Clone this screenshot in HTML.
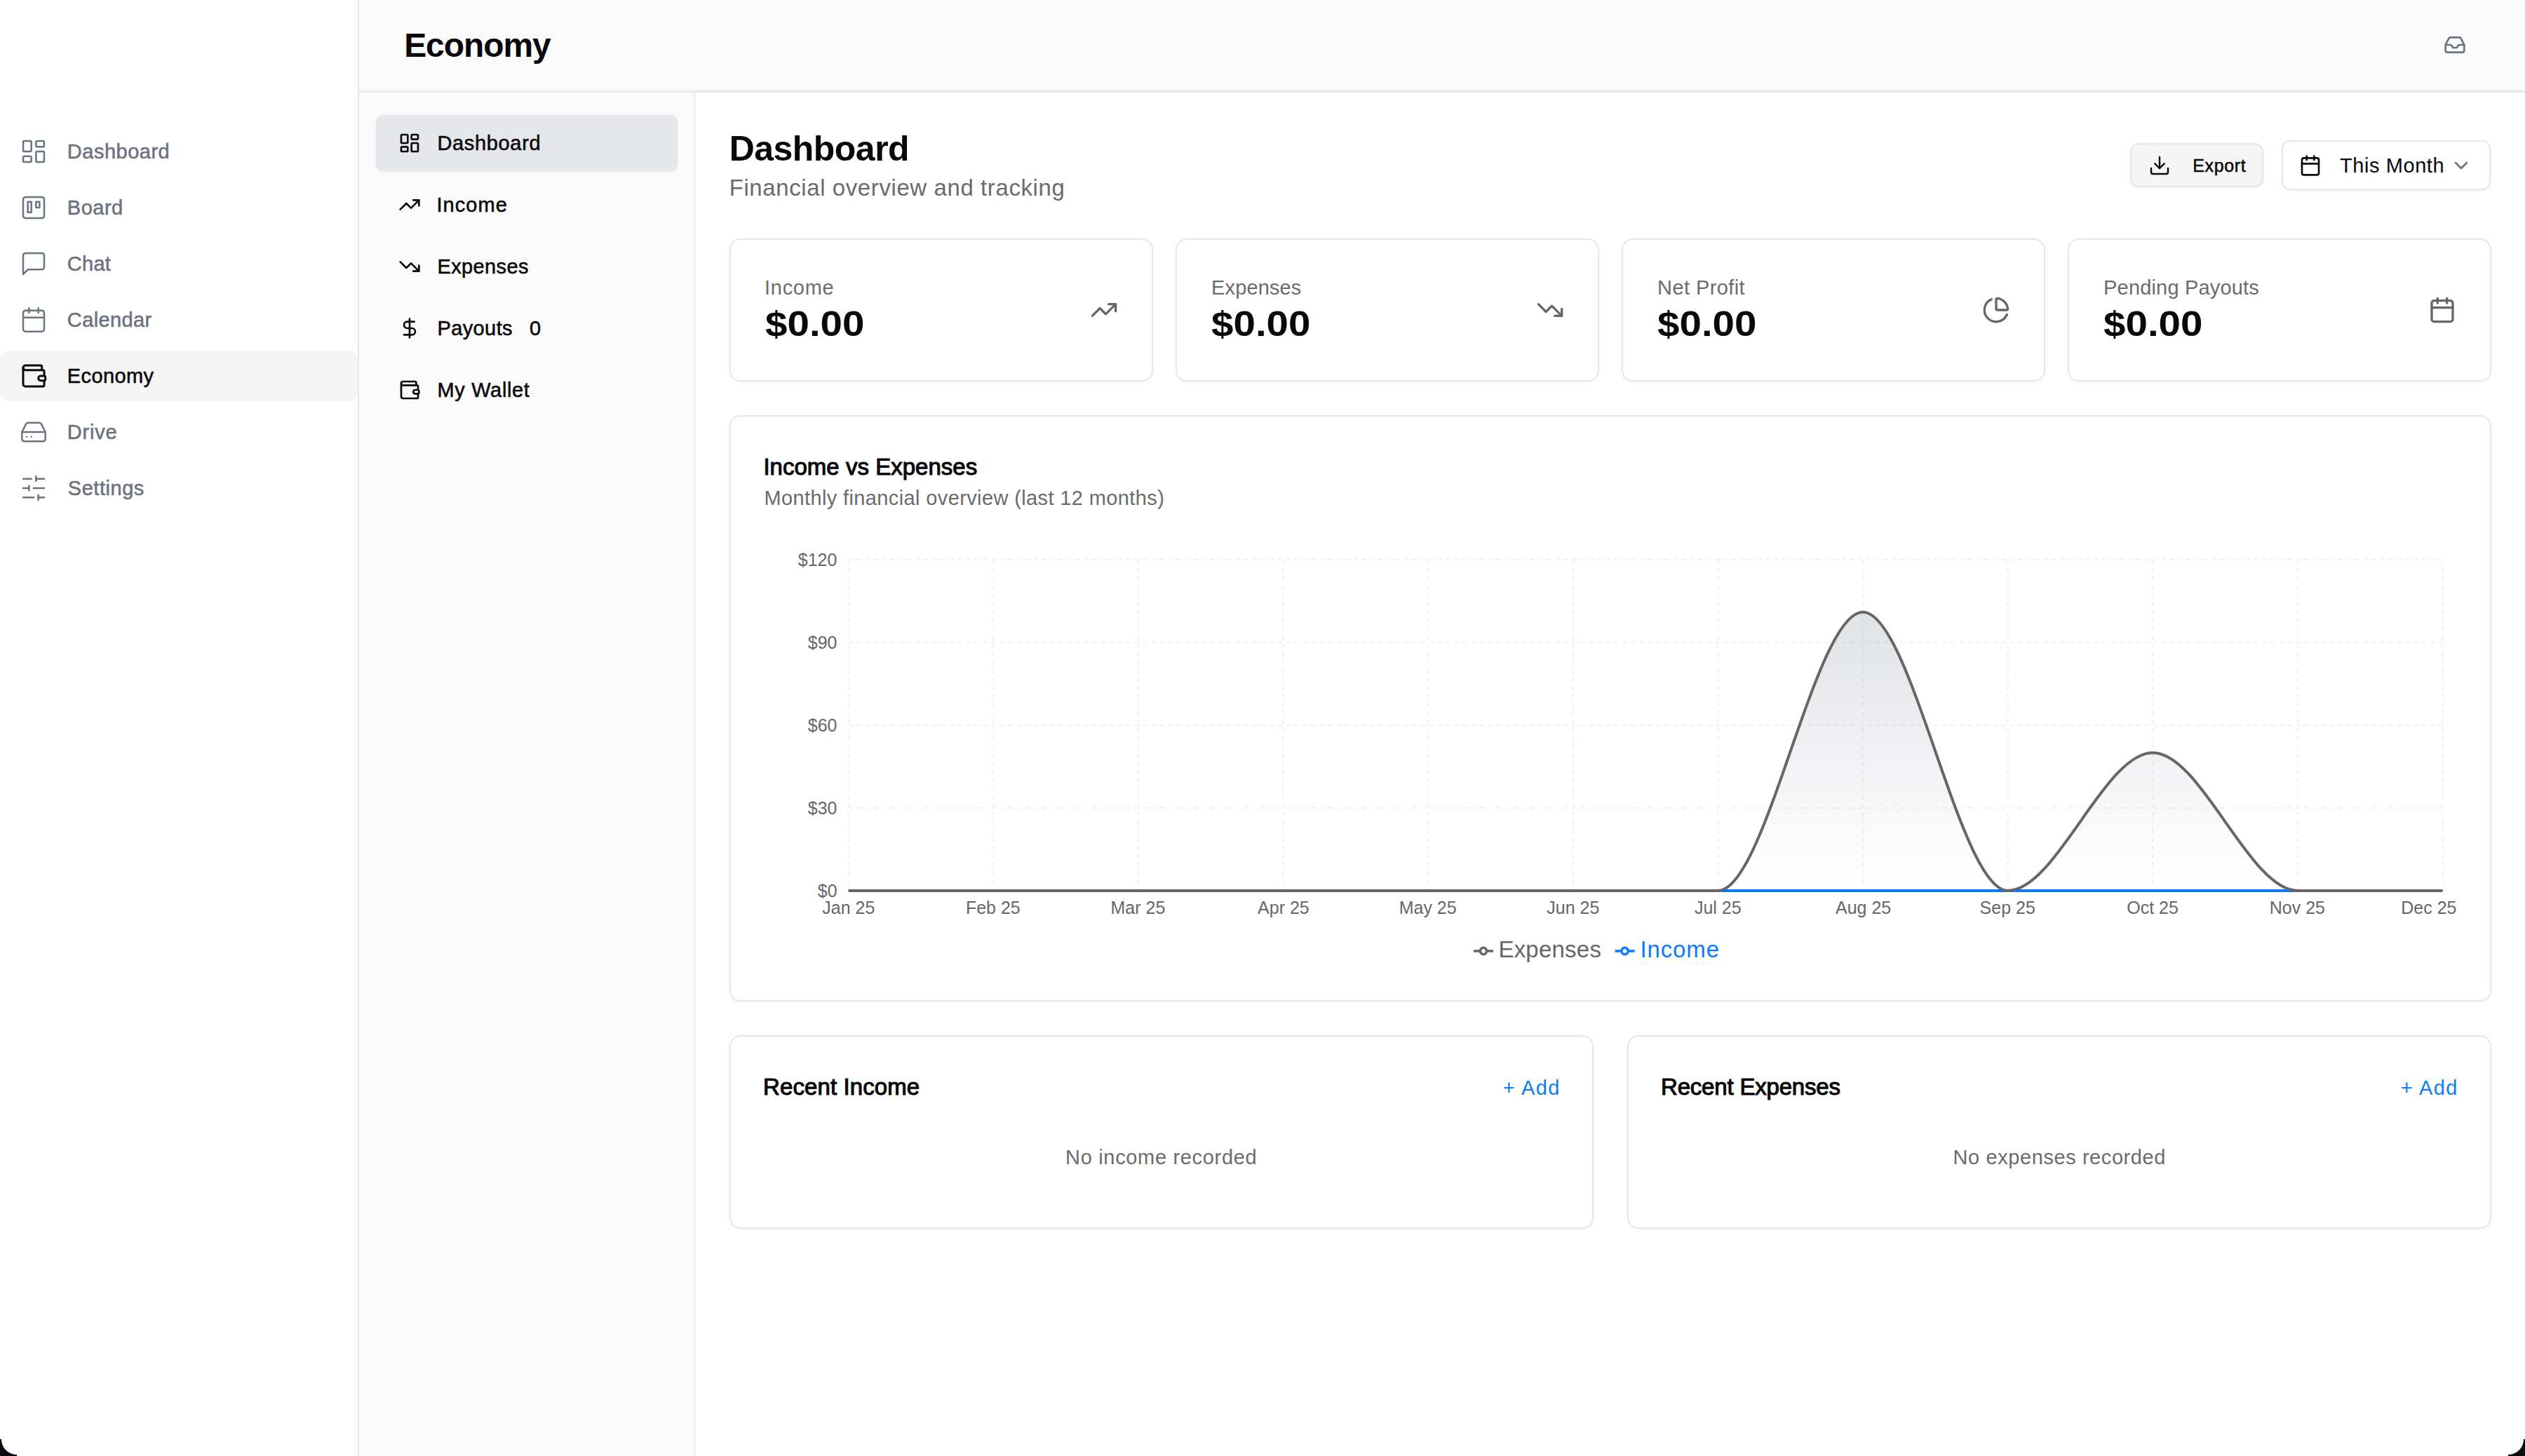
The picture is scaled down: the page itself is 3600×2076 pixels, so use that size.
<!DOCTYPE html>
<html><head><meta charset="utf-8"><style>
html,body{margin:0;padding:0;width:3600px;height:2076px;overflow:hidden;background:#fff;}
body{position:relative;font-family:"Liberation Sans", sans-serif;}
.b{position:absolute;box-sizing:content-box}
.card{background:#fff;border:2px solid #e5e7eb;border-radius:16px;box-shadow:0 2px 4px rgba(0,0,0,0.04)}
.t{position:absolute;white-space:nowrap;font-family:"Liberation Sans", sans-serif}
.ic{position:absolute;overflow:visible}
</style></head><body>

<div class="b" style="left:0;top:0;width:510px;height:2076px;background:#ffffff"></div>
<div class="b" style="left:510px;top:0;width:2px;height:2076px;background:#e5e7eb"></div>
<div class="b" style="left:512px;top:0;width:3088px;height:130px;background:#fafafa"></div>
<div class="b" style="left:512px;top:128px;width:3088px;height:2px;background:#f0f0f2"></div>
<div class="b" style="left:512px;top:130px;width:3088px;height:2px;background:#e5e7eb"></div>
<div class="b" style="left:512px;top:132px;width:478px;height:1944px;background:#fafafa"></div>
<div class="b" style="left:990px;top:132px;width:2px;height:1944px;background:#f0f0f2"></div>
<div class="b" style="left:0;top:500px;width:510px;height:72px;background:#f4f4f5;border-radius:12px"></div>
<div class="b" style="left:536px;top:164px;width:430px;height:80px;background:#e5e7eb;border-radius:9px;box-shadow:0 2px 4px rgba(0,0,0,0.04)"></div>
<div class="b" style="left:3037px;top:204px;width:186px;height:59px;background:#f5f5f5;border:2px solid #e5e7eb;border-radius:12px;box-shadow:0 2px 3px rgba(0,0,0,0.04)"></div>
<div class="b" style="left:3253px;top:200px;width:294px;height:67px;background:#ffffff;border:2px solid #e5e7eb;border-radius:12px;box-shadow:0 2px 4px rgba(0,0,0,0.05)"></div>
<div class="b card" style="left:1040px;top:340px;width:600px;height:200px"></div>
<div class="b card" style="left:1676px;top:340px;width:600px;height:200px"></div>
<div class="b card" style="left:2312px;top:340px;width:600px;height:200px"></div>
<div class="b card" style="left:2948px;top:340px;width:600px;height:200px"></div>
<div class="b card" style="left:1040px;top:592px;width:2508px;height:832px"></div>
<div class="b card" style="left:1040px;top:1476px;width:1228px;height:272px"></div>
<div class="b card" style="left:2320px;top:1476px;width:1228px;height:272px"></div>

<svg class="ic" style="left:0;top:0" width="3600" height="2076" viewBox="0 0 3600 2076">
<defs><linearGradient id="gx" x1="0" y1="0" x2="0" y2="1"><stop offset="5%" stop-color="#a6a9b4" stop-opacity="0.32"/><stop offset="95%" stop-color="#a6a9b4" stop-opacity="0"/></linearGradient></defs>
<g stroke="#f0f0f0" stroke-width="2" stroke-dasharray="6 6" fill="none"><line x1="1209.8" x2="3482.4" y1="797.90" y2="797.90"/><line x1="1209.8" x2="3482.4" y1="915.90" y2="915.90"/><line x1="1209.8" x2="3482.4" y1="1033.90" y2="1033.90"/><line x1="1209.8" x2="3482.4" y1="1151.90" y2="1151.90"/><line x1="1209.80" x2="1209.80" y1="797.9" y2="1269.9"/><line x1="1416.40" x2="1416.40" y1="797.9" y2="1269.9"/><line x1="1623.00" x2="1623.00" y1="797.9" y2="1269.9"/><line x1="1829.60" x2="1829.60" y1="797.9" y2="1269.9"/><line x1="2036.20" x2="2036.20" y1="797.9" y2="1269.9"/><line x1="2242.80" x2="2242.80" y1="797.9" y2="1269.9"/><line x1="2449.40" x2="2449.40" y1="797.9" y2="1269.9"/><line x1="2656.00" x2="2656.00" y1="797.9" y2="1269.9"/><line x1="2862.60" x2="2862.60" y1="797.9" y2="1269.9"/><line x1="3069.20" x2="3069.20" y1="797.9" y2="1269.9"/><line x1="3275.80" x2="3275.80" y1="797.9" y2="1269.9"/><line x1="3482.40" x2="3482.40" y1="797.9" y2="1269.9"/></g>
<line x1="1209.8" x2="3482.4" y1="1269.9" y2="1269.9" stroke="#0a7aff" stroke-width="4"/>
<path d="M1209.80,1269.90 C1278.67,1269.90 1347.53,1269.90 1416.40,1269.90 C1485.27,1269.90 1554.13,1269.90 1623.00,1269.90 C1691.87,1269.90 1760.73,1269.90 1829.60,1269.90 C1898.47,1269.90 1967.33,1269.90 2036.20,1269.90 C2105.07,1269.90 2173.93,1269.90 2242.80,1269.90 C2311.67,1269.90 2380.53,1269.90 2449.40,1269.90 C2518.27,1269.90 2587.13,872.63 2656.00,872.63 C2724.87,872.63 2793.73,1269.90 2862.60,1269.90 C2931.47,1269.90 3000.33,1073.23 3069.20,1073.23 C3138.07,1073.23 3206.93,1269.90 3275.80,1269.90 C3344.67,1269.90 3413.53,1269.90 3482.40,1269.90 L3482.40,1269.90 L1209.80,1269.90 Z" fill="url(#gx)" stroke="none"/>
<path d="M1209.80,1269.90 C1278.67,1269.90 1347.53,1269.90 1416.40,1269.90 C1485.27,1269.90 1554.13,1269.90 1623.00,1269.90 C1691.87,1269.90 1760.73,1269.90 1829.60,1269.90 C1898.47,1269.90 1967.33,1269.90 2036.20,1269.90 C2105.07,1269.90 2173.93,1269.90 2242.80,1269.90 C2311.67,1269.90 2380.53,1269.90 2449.40,1269.90 C2518.27,1269.90 2587.13,872.63 2656.00,872.63 C2724.87,872.63 2793.73,1269.90 2862.60,1269.90 C2931.47,1269.90 3000.33,1073.23 3069.20,1073.23 C3138.07,1073.23 3206.93,1269.90 3275.80,1269.90 C3344.67,1269.90 3413.53,1269.90 3482.40,1269.90" fill="none" stroke="#666666" stroke-width="4"/>
<g fill="none" stroke-width="3.5">
<path stroke="#666666" d="M2101,1356h9.33A4.67,4.67,0,1,1,2119.67,1356H2129M2119.67,1356A4.67,4.67,0,1,1,2110.33,1356"/>
<path stroke="#0a7aff" d="M2302.6,1356h9.33A4.67,4.67,0,1,1,2321.27,1356H2330.6M2321.27,1356A4.67,4.67,0,1,1,2311.93,1356"/>
</g>
</svg>
<svg class="ic" style="left:28px;top:196px" width="40" height="40" viewBox="0 0 24 24" fill="none" stroke="#6b7280" stroke-width="1.5" stroke-linecap="round" stroke-linejoin="round"><rect width="7" height="9" x="3" y="3" rx="1"/><rect width="7" height="5" x="14" y="3" rx="1"/><rect width="7" height="9" x="14" y="12" rx="1"/><rect width="7" height="5" x="3" y="16" rx="1"/></svg><svg class="ic" style="left:28px;top:276px" width="40" height="40" viewBox="0 0 24 24" fill="none" stroke="#6b7280" stroke-width="1.5" stroke-linecap="round" stroke-linejoin="round"><rect width="18" height="18" x="3" y="3" rx="2" ry="2"/><rect width="3" height="9" x="7" y="7"/><rect width="3" height="5" x="14" y="7"/></svg><svg class="ic" style="left:28px;top:356px" width="40" height="40" viewBox="0 0 24 24" fill="none" stroke="#6b7280" stroke-width="1.5" stroke-linecap="round" stroke-linejoin="round"><path d="M21 15a2 2 0 0 1-2 2H7l-4 4V5a2 2 0 0 1 2-2h14a2 2 0 0 1 2 2z"/></svg><svg class="ic" style="left:28px;top:436px" width="40" height="40" viewBox="0 0 24 24" fill="none" stroke="#6b7280" stroke-width="1.5" stroke-linecap="round" stroke-linejoin="round"><path d="M8 2v4"/><path d="M16 2v4"/><rect width="18" height="18" x="3" y="4" rx="2"/><path d="M3 10h18"/></svg><svg class="ic" style="left:28px;top:516px" width="40" height="40" viewBox="0 0 24 24" fill="none" stroke="#09090b" stroke-width="1.8" stroke-linecap="round" stroke-linejoin="round"><path d="M19 7V4a1 1 0 0 0-1-1H5a2 2 0 0 0 0 4h15a1 1 0 0 1 1 1v4h-3a2 2 0 0 0 0 4h3a1 1 0 0 0 1-1v-2a1 1 0 0 0-1-1"/><path d="M3 5v14a2 2 0 0 0 2 2h15a1 1 0 0 0 1-1v-4"/></svg><svg class="ic" style="left:28px;top:596px" width="40" height="40" viewBox="0 0 24 24" fill="none" stroke="#6b7280" stroke-width="1.5" stroke-linecap="round" stroke-linejoin="round"><line x1="22" x2="2" y1="12" y2="12"/><path d="M5.45 5.11 2 12v6a2 2 0 0 0 2 2h16a2 2 0 0 0 2-2v-6l-3.45-6.89A2 2 0 0 0 16.76 4H7.24a2 2 0 0 0-1.79 1.11z"/><line x1="6" x2="6.01" y1="16" y2="16"/><line x1="10" x2="10.01" y1="16" y2="16"/></svg><svg class="ic" style="left:28px;top:676px" width="40" height="40" viewBox="0 0 24 24" fill="none" stroke="#6b7280" stroke-width="1.5" stroke-linecap="round" stroke-linejoin="round"><line x1="21" x2="14" y1="4" y2="4"/><line x1="10" x2="3" y1="4" y2="4"/><line x1="21" x2="12" y1="12" y2="12"/><line x1="8" x2="3" y1="12" y2="12"/><line x1="21" x2="16" y1="20" y2="20"/><line x1="12" x2="3" y1="20" y2="20"/><line x1="14" x2="14" y1="2" y2="6"/><line x1="8" x2="8" y1="10" y2="14"/><line x1="16" x2="16" y1="18" y2="22"/></svg><svg class="ic" style="left:568px;top:188px" width="32" height="32" viewBox="0 0 24 24" fill="none" stroke="#09090b" stroke-width="2" stroke-linecap="round" stroke-linejoin="round"><rect width="7" height="9" x="3" y="3" rx="1"/><rect width="7" height="5" x="14" y="3" rx="1"/><rect width="7" height="9" x="14" y="12" rx="1"/><rect width="7" height="5" x="3" y="16" rx="1"/></svg><svg class="ic" style="left:568px;top:276px" width="32" height="32" viewBox="0 0 24 24" fill="none" stroke="#09090b" stroke-width="2" stroke-linecap="round" stroke-linejoin="round"><polyline points="22 7 13.5 15.5 8.5 10.5 2 17"/><polyline points="16 7 22 7 22 13"/></svg><svg class="ic" style="left:568px;top:364px" width="32" height="32" viewBox="0 0 24 24" fill="none" stroke="#09090b" stroke-width="2" stroke-linecap="round" stroke-linejoin="round"><polyline points="22 17 13.5 8.5 8.5 13.5 2 7"/><polyline points="16 17 22 17 22 11"/></svg><svg class="ic" style="left:568px;top:452px" width="32" height="32" viewBox="0 0 24 24" fill="none" stroke="#09090b" stroke-width="2" stroke-linecap="round" stroke-linejoin="round"><line x1="12" x2="12" y1="2" y2="22"/><path d="M17 5H9.5a3.5 3.5 0 0 0 0 7h5a3.5 3.5 0 0 1 0 7H6"/></svg><svg class="ic" style="left:568px;top:540px" width="32" height="32" viewBox="0 0 24 24" fill="none" stroke="#09090b" stroke-width="2" stroke-linecap="round" stroke-linejoin="round"><path d="M19 7V4a1 1 0 0 0-1-1H5a2 2 0 0 0 0 4h15a1 1 0 0 1 1 1v4h-3a2 2 0 0 0 0 4h3a1 1 0 0 0 1-1v-2a1 1 0 0 0-1-1"/><path d="M3 5v14a2 2 0 0 0 2 2h15a1 1 0 0 0 1-1v-4"/></svg><svg class="ic" style="left:1554px;top:422px" width="40" height="40" viewBox="0 0 24 24" fill="none" stroke="#666666" stroke-width="2" stroke-linecap="round" stroke-linejoin="round"><polyline points="22 7 13.5 15.5 8.5 10.5 2 17"/><polyline points="16 7 22 7 22 13"/></svg><svg class="ic" style="left:2190px;top:422px" width="40" height="40" viewBox="0 0 24 24" fill="none" stroke="#666666" stroke-width="2" stroke-linecap="round" stroke-linejoin="round"><polyline points="22 17 13.5 8.5 8.5 13.5 2 7"/><polyline points="16 17 22 17 22 11"/></svg><svg class="ic" style="left:2826px;top:422px" width="40" height="40" viewBox="0 0 24 24" fill="none" stroke="#666666" stroke-width="2" stroke-linecap="round" stroke-linejoin="round"><path d="M21 12c.552 0 1.005-.449.95-.998a10 10 0 0 0-8.953-8.951c-.55-.055-.998.398-.998.95v8a1 1 0 0 0 1 1z"/><path d="M21.21 15.89A10 10 0 1 1 8 2.83"/></svg><svg class="ic" style="left:3462px;top:422px" width="40" height="40" viewBox="0 0 24 24" fill="none" stroke="#666666" stroke-width="2" stroke-linecap="round" stroke-linejoin="round"><path d="M8 2v4"/><path d="M16 2v4"/><rect width="18" height="18" x="3" y="4" rx="2"/><path d="M3 10h18"/></svg><svg class="ic" style="left:3063px;top:220px" width="32" height="32" viewBox="0 0 24 24" fill="none" stroke="#09090b" stroke-width="1.85" stroke-linecap="round" stroke-linejoin="round"><path d="M21 15v4a2 2 0 0 1-2 2H5a2 2 0 0 1-2-2v-4"/><polyline points="7 10 12 15 17 10"/><line x1="12" x2="12" y1="15" y2="3"/></svg><svg class="ic" style="left:3278px;top:220px" width="32" height="32" viewBox="0 0 24 24" fill="none" stroke="#09090b" stroke-width="2" stroke-linecap="round" stroke-linejoin="round"><path d="M8 2v4"/><path d="M16 2v4"/><rect width="18" height="18" x="3" y="4" rx="2"/><path d="M3 10h18"/></svg><svg class="ic" style="left:3493px;top:220px" width="32" height="32" viewBox="0 0 24 24" fill="none" stroke="#71717a" stroke-width="2" stroke-linecap="round" stroke-linejoin="round"><path d="m6 9 6 6 6-6"/></svg><svg class="ic" style="left:3484px;top:48px" width="32" height="32" viewBox="0 0 24 24" fill="none" stroke="#6b7280" stroke-width="2" stroke-linecap="round" stroke-linejoin="round"><polyline points="22 12 16 12 14 15 10 15 8 12 2 12"/><path d="M5.45 5.11 2 12v6a2 2 0 0 0 2 2h16a2 2 0 0 0 2-2v-6l-3.45-6.89A2 2 0 0 0 16.76 4H7.24a2 2 0 0 0-1.79 1.11z"/></svg>
<div class="t" style="left:576.2px;top:41.2px;font-size:48px;line-height:48px;font-weight:700;color:#09090b;letter-spacing:-1.08px;">Economy</div><div class="t" style="left:95.8px;top:202.0px;font-size:29px;line-height:29px;font-weight:400;color:#6b7280;letter-spacing:0.51px;-webkit-text-stroke:0.55px currentColor;">Dashboard</div><div class="t" style="left:95.8px;top:282.0px;font-size:29px;line-height:29px;font-weight:400;color:#6b7280;letter-spacing:0.50px;-webkit-text-stroke:0.55px currentColor;">Board</div><div class="t" style="left:95.8px;top:362.0px;font-size:29px;line-height:29px;font-weight:400;color:#6b7280;letter-spacing:0.27px;-webkit-text-stroke:0.55px currentColor;">Chat</div><div class="t" style="left:95.8px;top:442.0px;font-size:29px;line-height:29px;font-weight:400;color:#6b7280;letter-spacing:0.40px;-webkit-text-stroke:0.55px currentColor;">Calendar</div><div class="t" style="left:95.8px;top:522.0px;font-size:29px;line-height:29px;font-weight:400;color:#09090b;letter-spacing:0.40px;-webkit-text-stroke:0.55px currentColor;">Economy</div><div class="t" style="left:95.8px;top:602.0px;font-size:29px;line-height:29px;font-weight:400;color:#6b7280;letter-spacing:0.78px;-webkit-text-stroke:0.55px currentColor;">Drive</div><div class="t" style="left:96.8px;top:682.0px;font-size:29px;line-height:29px;font-weight:400;color:#6b7280;letter-spacing:0.54px;-webkit-text-stroke:0.55px currentColor;">Settings</div><div class="t" style="left:623.5px;top:190.0px;font-size:29px;line-height:29px;font-weight:400;color:#09090b;letter-spacing:0.65px;-webkit-text-stroke:0.55px currentColor;">Dashboard</div><div class="t" style="left:622.5px;top:278.0px;font-size:29px;line-height:29px;font-weight:400;color:#09090b;letter-spacing:1.06px;-webkit-text-stroke:0.55px currentColor;">Income</div><div class="t" style="left:623.5px;top:366.0px;font-size:29px;line-height:29px;font-weight:400;color:#09090b;letter-spacing:0.37px;-webkit-text-stroke:0.55px currentColor;">Expenses</div><div class="t" style="left:623.5px;top:454.0px;font-size:29px;line-height:29px;font-weight:400;color:#09090b;letter-spacing:0.38px;-webkit-text-stroke:0.55px currentColor;">Payouts</div><div class="t" style="left:623.5px;top:542.0px;font-size:29px;line-height:29px;font-weight:400;color:#09090b;letter-spacing:0.65px;-webkit-text-stroke:0.55px currentColor;">My Wallet</div><div class="t" style="left:755.1px;top:454.0px;font-size:29px;line-height:29px;font-weight:400;color:#09090b;letter-spacing:0.00px;-webkit-text-stroke:0.55px currentColor;">0</div><div class="t" style="left:1039.7px;top:187.3px;font-size:50px;line-height:50px;font-weight:700;color:#09090b;letter-spacing:-0.53px;">Dashboard</div><div class="t" style="left:1039.7px;top:250.5px;font-size:33px;line-height:33px;font-weight:400;color:#6b6b6b;letter-spacing:0.59px;">Financial overview and tracking</div><div class="t" style="left:3126.2px;top:223.8px;font-size:25px;line-height:25px;font-weight:400;color:#09090b;letter-spacing:0.64px;-webkit-text-stroke:0.55px currentColor;">Export</div><div class="t" style="left:3336.1px;top:222.1px;font-size:29px;line-height:29px;font-weight:400;color:#09090b;letter-spacing:0.56px;">This Month</div><div class="t" style="left:1090.1px;top:396.1px;font-size:29px;line-height:29px;font-weight:400;color:#6b6b6b;letter-spacing:0.68px;">Income</div><div class="t" style="left:1090.8px;top:436.6px;font-size:50px;line-height:50px;font-weight:700;color:#09090b;letter-spacing:0.00px;transform:scaleX(1.1311);transform-origin:0 0;">$0.00</div><div class="t" style="left:1727.1px;top:396.1px;font-size:29px;line-height:29px;font-weight:400;color:#6b6b6b;letter-spacing:0.13px;">Expenses</div><div class="t" style="left:1726.8px;top:436.6px;font-size:50px;line-height:50px;font-weight:700;color:#09090b;letter-spacing:0.00px;transform:scaleX(1.1311);transform-origin:0 0;">$0.00</div><div class="t" style="left:2363.1px;top:396.1px;font-size:29px;line-height:29px;font-weight:400;color:#6b6b6b;letter-spacing:0.41px;">Net Profit</div><div class="t" style="left:2362.8px;top:436.6px;font-size:50px;line-height:50px;font-weight:700;color:#09090b;letter-spacing:0.00px;transform:scaleX(1.1311);transform-origin:0 0;">$0.00</div><div class="t" style="left:2999.1px;top:396.1px;font-size:29px;line-height:29px;font-weight:400;color:#6b6b6b;letter-spacing:0.17px;">Pending Payouts</div><div class="t" style="left:2998.8px;top:436.6px;font-size:50px;line-height:50px;font-weight:700;color:#09090b;letter-spacing:0.00px;transform:scaleX(1.1311);transform-origin:0 0;">$0.00</div><div class="t" style="left:1088.4px;top:649.2px;font-size:33px;line-height:33px;font-weight:400;color:#09090b;letter-spacing:0.02px;-webkit-text-stroke:1.1px currentColor;">Income vs Expenses</div><div class="t" style="left:1089.4px;top:696.2px;font-size:29px;line-height:29px;font-weight:400;color:#6b6b6b;letter-spacing:0.38px;">Monthly financial overview (last 12 months)</div><div class="t" style="left:1137.8px;top:786.3px;font-size:25px;line-height:25px;font-weight:400;color:#666666;letter-spacing:0.00px;">$120</div><div class="t" style="left:1151.8px;top:904.3px;font-size:25px;line-height:25px;font-weight:400;color:#666666;letter-spacing:0.00px;">$90</div><div class="t" style="left:1151.8px;top:1022.3px;font-size:25px;line-height:25px;font-weight:400;color:#666666;letter-spacing:0.00px;">$60</div><div class="t" style="left:1151.8px;top:1140.3px;font-size:25px;line-height:25px;font-weight:400;color:#666666;letter-spacing:0.00px;">$30</div><div class="t" style="left:1165.8px;top:1258.3px;font-size:25px;line-height:25px;font-weight:400;color:#666666;letter-spacing:0.00px;">$0</div><div class="t" style="left:1172.3px;top:1281.9px;font-size:25px;line-height:25px;font-weight:400;color:#666666;letter-spacing:0.00px;">Jan 25</div><div class="t" style="left:1376.9px;top:1281.9px;font-size:25px;line-height:25px;font-weight:400;color:#666666;letter-spacing:0.00px;">Feb 25</div><div class="t" style="left:1583.5px;top:1281.9px;font-size:25px;line-height:25px;font-weight:400;color:#666666;letter-spacing:0.00px;">Mar 25</div><div class="t" style="left:1793.1px;top:1281.9px;font-size:25px;line-height:25px;font-weight:400;color:#666666;letter-spacing:0.00px;">Apr 25</div><div class="t" style="left:1994.7px;top:1281.9px;font-size:25px;line-height:25px;font-weight:400;color:#666666;letter-spacing:0.00px;">May 25</div><div class="t" style="left:2205.3px;top:1281.9px;font-size:25px;line-height:25px;font-weight:400;color:#666666;letter-spacing:0.00px;">Jun 25</div><div class="t" style="left:2415.9px;top:1281.9px;font-size:25px;line-height:25px;font-weight:400;color:#666666;letter-spacing:0.00px;">Jul 25</div><div class="t" style="left:2617.0px;top:1281.9px;font-size:25px;line-height:25px;font-weight:400;color:#666666;letter-spacing:0.00px;">Aug 25</div><div class="t" style="left:2822.6px;top:1281.9px;font-size:25px;line-height:25px;font-weight:400;color:#666666;letter-spacing:0.00px;">Sep 25</div><div class="t" style="left:3032.2px;top:1281.9px;font-size:25px;line-height:25px;font-weight:400;color:#666666;letter-spacing:0.00px;">Oct 25</div><div class="t" style="left:3235.8px;top:1281.9px;font-size:25px;line-height:25px;font-weight:400;color:#666666;letter-spacing:0.00px;">Nov 25</div><div class="t" style="left:3423.3px;top:1281.9px;font-size:25px;line-height:25px;font-weight:400;color:#666666;letter-spacing:0.00px;">Dec 25</div><div class="t" style="left:2136.4px;top:1337.1px;font-size:33px;line-height:33px;font-weight:400;color:#666666;letter-spacing:0.23px;">Expenses</div><div class="t" style="left:2338.4px;top:1337.1px;font-size:33px;line-height:33px;font-weight:400;color:#0a7aff;letter-spacing:0.90px;">Income</div><div class="t" style="left:1088.0px;top:1533.3px;font-size:33px;line-height:33px;font-weight:400;color:#09090b;letter-spacing:0.10px;-webkit-text-stroke:1.1px currentColor;">Recent Income</div><div class="t" style="left:2368.0px;top:1533.3px;font-size:33px;line-height:33px;font-weight:400;color:#09090b;letter-spacing:-0.19px;-webkit-text-stroke:1.1px currentColor;">Recent Expenses</div><div class="t" style="left:2142.7px;top:1536.5px;font-size:29px;line-height:29px;font-weight:400;color:#0a7aff;letter-spacing:1.43px;">+ Add</div><div class="t" style="left:3422.7px;top:1536.5px;font-size:29px;line-height:29px;font-weight:400;color:#0a7aff;letter-spacing:1.42px;">+ Add</div><div class="t" style="left:1519.1px;top:1635.5px;font-size:29px;line-height:29px;font-weight:400;color:#6b6b6b;letter-spacing:0.67px;">No income recorded</div><div class="t" style="left:2784.6px;top:1635.5px;font-size:29px;line-height:29px;font-weight:400;color:#6b6b6b;letter-spacing:0.58px;">No expenses recorded</div>
<div class="b" style="left:0;top:2052px;width:24px;height:24px;background:radial-gradient(circle at 100% 0%, rgba(11,12,16,0) 21.5px, #0b0c10 22.5px)"></div>
<div class="b" style="left:3576px;top:2052px;width:24px;height:24px;background:radial-gradient(circle at 0% 0%, rgba(11,12,16,0) 21.5px, #0b0c10 22.5px)"></div>
<script>(function(){var w=window.innerWidth;if(w&&Math.abs(w-3600)>4){document.documentElement.style.zoom=(w/3600);}})();</script>
</body></html>
